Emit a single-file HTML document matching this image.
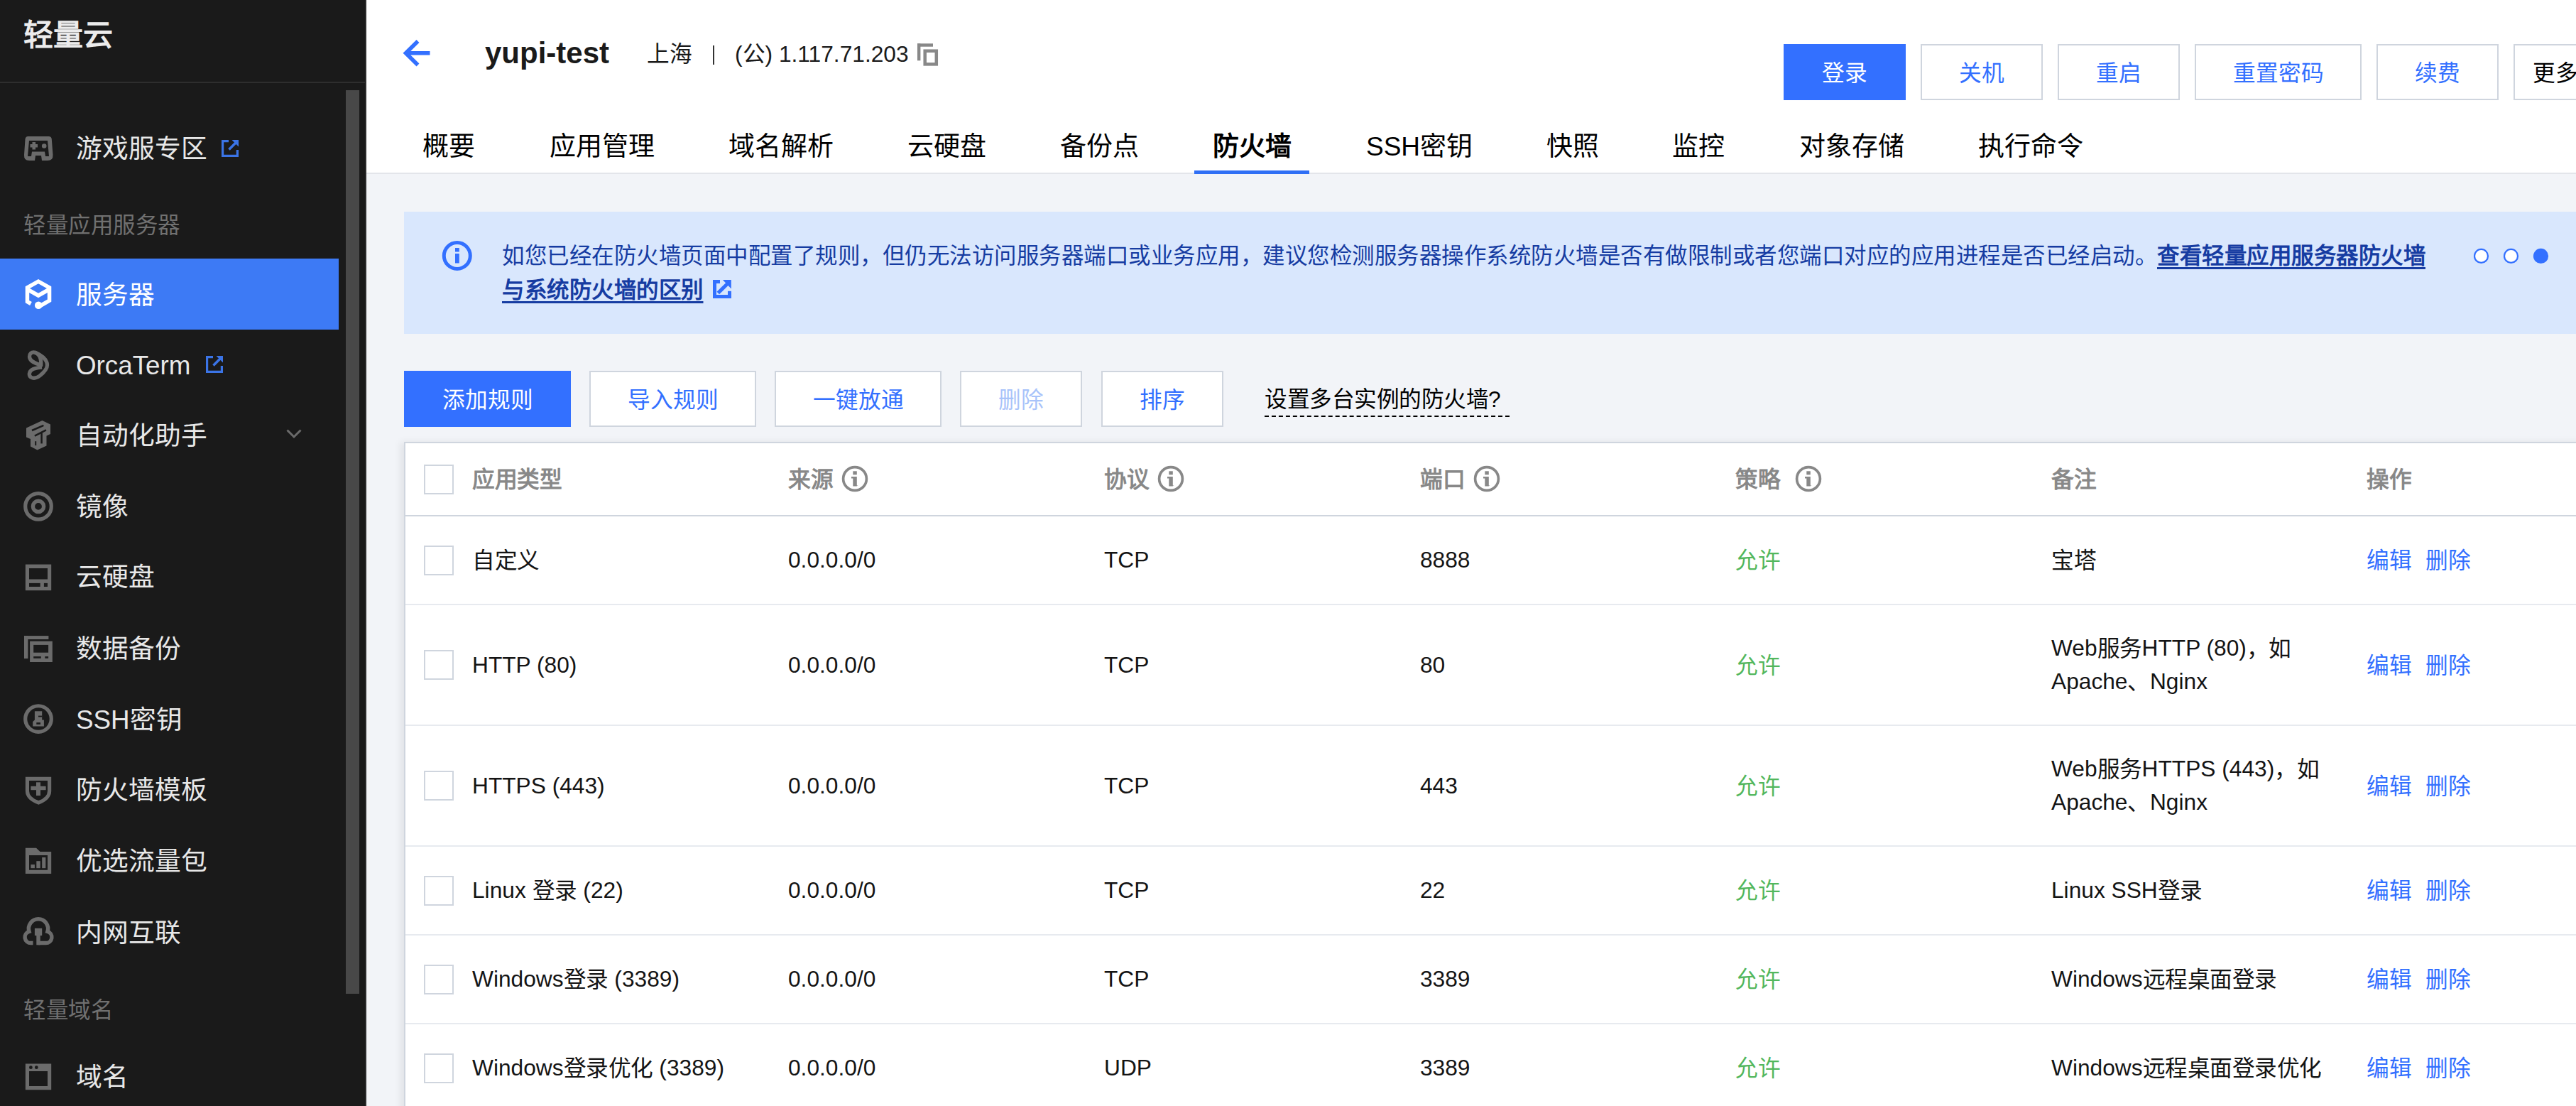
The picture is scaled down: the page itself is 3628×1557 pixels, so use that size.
<!DOCTYPE html>
<html lang="zh-CN"><head><meta charset="utf-8">
<style>
*{box-sizing:border-box;margin:0;padding:0}
html,body{width:3628px;height:1557px;overflow:hidden}
body{position:relative;background:#f2f4f8;font-family:"Liberation Sans",sans-serif;color:#000}
.a{position:absolute;white-space:nowrap}
#side{position:absolute;left:0;top:0;width:516px;height:1557px;background:#1a1a1a;border-right:2px solid #2b2b2b}
.logo{left:33px;top:19.5px;font-size:42px;font-weight:900;color:#ececec;line-height:60px}
.sep{left:0;top:115px;width:514px;height:2px;background:#2e2e2e}
.thumb{left:487px;top:127px;width:19px;height:1272px;background:#484848}
.si{left:107px;font-size:36.75px;color:#e8e8e8;line-height:50px}
.sl{left:33px;font-size:31.5px;color:#707070;line-height:44px;letter-spacing:-0.5px}
.ic{position:absolute;left:25px;width:60px;height:60px}
.act{left:0;top:364px;width:477px;height:100px;background:#3d7af5}
#main{position:absolute;left:516px;top:0;width:3112px;height:1557px}

.t-title{left:683px;top:46.5px;font-size:42px;font-weight:bold;color:#1a1a1a;line-height:56px}
.t-sub{top:53px;font-size:31.7px;color:#1a1a1a;line-height:46px}
.btn{height:79px;padding-top:1.5px;border:2.5px solid #cfd5de;background:#fff;color:#3370ff;font-size:31.7px;line-height:74px;text-align:center}
.btn.pri{background:#3370ff;border-color:#3370ff;color:#fff}
.tab{top:182px;font-size:37px;color:#000;line-height:50px}

.bn{font-size:31.5px;line-height:48px;color:#163ca2;letter-spacing:-0.5px}
.bn b{text-decoration:underline;text-decoration-thickness:3px;text-underline-offset:5px}
.tip{font-size:31.7px;line-height:46px;color:#000;border-bottom:2px dashed #000;height:48px}
#tbl{left:569px;top:622px;width:3100px;height:1000px;background:#fff;border-top:2px solid #cfd5de;border-left:2px solid #cfd5de;box-shadow:-5px 0 10px rgba(0,0,0,0.07)}
.tr{position:absolute;left:0;width:3100px;border-bottom:2px solid #e7eaef}
.th{border-bottom-color:#cfd5de}
.th .td{color:#888;font-weight:bold}
.td{position:absolute;top:0;bottom:0;display:flex;align-items:center;font-size:31.7px;line-height:47px;color:#141414;white-space:nowrap}
.cb{position:absolute;left:26px;top:50%;margin-top:-21px;width:42px;height:42px;border:2px solid #cfd5de;background:#fff}
.qi{display:inline-block;width:40px;height:40px;margin-left:11px}
.c{letter-spacing:-0.5px;position:relative;top:1px}
.tx{display:block}
.tx .qi{vertical-align:middle;position:relative;top:-2.5px}
</style></head><body>
<div id="side">
  <div class="a logo">轻量云</div>
  <div class="a sep"></div>
  <div class="a thumb"></div>
  <div class="a act"></div>

  <!-- game -->
  <svg class="ic" style="top:180px" viewBox="0 0 60 60"><path fill="#6b6b6b" fill-rule="evenodd" d="M14.5,12H43.5Q47.5,12 47.8,16L49.5,38Q50,46 42,46H34L33,39H25L24,46H16Q8.5,46 9,38L10.5,16Q11,12 14.5,12ZM16,18H42L44,40H39L38,33.5H20L19,40H14Z"/><rect fill="#6b6b6b" x="17.5" y="23" width="10.5" height="4.5"/><rect fill="#6b6b6b" x="20.5" y="20" width="4.5" height="10.5"/><circle fill="#6b6b6b" cx="37.2" cy="25.5" r="3.3"/></svg>
  <div class="a si" style="top:185px">游戏服专区</div>
  <svg class="a" style="left:300px;top:185px;width:40px;height:40px" viewBox="0 0 40 40"><path fill="none" stroke="#3b74e6" stroke-width="3.2" d="M22,13.6H13.6V34.4H34.4V26"/><path fill="#3b74e6" d="M26.5,12H36V21.5Z"/><path stroke="#3b74e6" stroke-width="3.5" d="M22.5,25.5L32,16"/></svg>

  <div class="a sl" style="top:294.5px">轻量应用服务器</div>

  <!-- server -->
  <svg class="ic" style="top:383px" viewBox="0 0 60 60"><g fill="none" stroke="#fff" stroke-width="5.5"><path d="M18.5,44.5L13.45,41.7V21.9L29,13.1L44.55,21.9V40.2L30,48.5"/><path d="M13.45,24.25L29,33L44.55,24.25"/></g><circle fill="#fff" cx="29.2" cy="46.8" r="5.3"/></svg>
  <div class="a si" style="top:391px;color:#fff">服务器</div>

  <!-- orcaterm -->
  <svg class="ic" style="top:483px" viewBox="0 0 60 60"><g fill="none" stroke="#6b6b6b" stroke-width="5.3"><path d="M31,30.5C25,28.5 16.5,25.5 16.5,19C16.5,14.5 19.5,12.8 22.5,12.8C26,12.8 30.5,16 32,22C33,26 33,29 32.5,33"/><path d="M24,13C31,16 41.5,22 41.5,31C41.5,37 36,42 31,46C27,49 22,50 18.5,48C15,45.5 16,40 20,37.5C24,35 30,34.5 34,34"/></g></svg>
  <div class="a si" style="top:490px">OrcaTerm</div>
  <svg class="a" style="left:277.6px;top:488.5px;width:40px;height:40px" viewBox="0 0 40 40"><path fill="none" stroke="#3b74e6" stroke-width="3.2" d="M22,13.6H13.6V34.4H34.4V26"/><path fill="#3b74e6" d="M26.5,12H36V21.5Z"/><path stroke="#3b74e6" stroke-width="3.5" d="M22.5,25.5L32,16"/></svg>

  <!-- automation -->
  <svg class="ic" style="top:581px" viewBox="0 0 60 60"><path fill="#6b6b6b" d="M12,21.5L34.5,11L46,16.5V30L40.5,32.5V46.5L27.5,52.5L18,47.5V37L12,34.5Z"/><g stroke="#1a1a1a" stroke-width="2.5"><path d="M20,25L36.4,17.9"/><path d="M23.9,32.6L39.9,24.4"/><path d="M33.6,28.2V43.4"/><path d="M25.2,40.2V46.1" stroke-width="2"/></g></svg>
  <div class="a si" style="top:589px">自动化助手</div>
  <svg class="a" style="left:390px;top:585px;width:50px;height:50px" viewBox="0 0 50 50"><path fill="none" stroke="#6b6b6b" stroke-width="3" d="M14.5,20.5L24,30L33.5,20.5"/></svg>

  <!-- image -->
  <svg class="ic" style="top:681px" viewBox="0 0 60 60"><g fill="none" stroke="#6b6b6b"><circle cx="29" cy="31.9" r="18.3" stroke-width="5.2"/><circle cx="29" cy="31.9" r="7.6" stroke-width="5.4"/></g></svg>
  <div class="a si" style="top:689px">镜像</div>

  <!-- disk -->
  <svg class="ic" style="top:781px" viewBox="0 0 60 60"><rect fill="#6b6b6b" x="10.85" y="13.56" width="36.35" height="36.64"/><g fill="#1a1a1a"><rect x="16" y="19" width="26" height="15.5"/><rect x="16" y="39.9" width="15.7" height="5.1"/><rect x="36.9" y="39.9" width="5.1" height="5.1"/></g></svg>
  <div class="a si" style="top:788px">云硬盘</div>

  <!-- backup -->
  <svg class="ic" style="top:881px" viewBox="0 0 60 60"><g fill="#6b6b6b"><rect x="9" y="14.1" width="34.4" height="4.9"/><rect x="9" y="14.1" width="5.4" height="32"/><rect x="17.1" y="21.7" width="31.7" height="29.3"/></g><g fill="#1a1a1a"><rect x="22.2" y="26.9" width="20.9" height="10.8"/><rect x="22.2" y="43.1" width="10.6" height="2.7"/><rect x="38.3" y="43.1" width="4.8" height="2.7"/></g></svg>
  <div class="a si" style="top:889px">数据备份</div>

  <!-- ssh -->
  <svg class="ic" style="top:981px" viewBox="0 0 60 60"><circle fill="none" stroke="#6b6b6b" stroke-width="5.2" cx="29" cy="31.05" r="18.3"/><path fill="#6b6b6b" d="M23.9,20.3H34.2V32.6H36.9V41.5H21.2V35L23.9,32.6Z"/><g fill="#1a1a1a"><rect x="29" y="26.6" width="5.2" height="1.8"/><rect x="26.3" y="36.1" width="5.7" height="2.7"/></g></svg>
  <div class="a si" style="top:989px">SSH密钥</div>

  <!-- firewall -->
  <svg class="ic" style="top:1081px" viewBox="0 0 60 60"><path fill="#6b6b6b" fill-rule="evenodd" d="M10.85,12.75H47.2V32.5Q47.2,45 29.3,51.8Q10.85,45 10.85,32.5ZM16,17.9H42V32.5Q42,41.5 29.3,46.1Q16,41.5 16,32.5Z"/><g fill="#6b6b6b"><rect x="18.4" y="25.8" width="21.2" height="5.4"/><rect x="26" y="20.3" width="6" height="18.7"/></g></svg>
  <div class="a si" style="top:1088px">防火墙模板</div>

  <!-- traffic -->
  <svg class="ic" style="top:1181px" viewBox="0 0 60 60"><path fill="#6b6b6b" fill-rule="evenodd" d="M10.85,12.75H26L31.5,17.9H47.2V49.1H10.85ZM16,23H42V43.7H16Z"/><g fill="#6b6b6b"><rect x="18.4" y="36.1" width="5.5" height="5.1"/><rect x="26.3" y="31.2" width="5.4" height="10"/><rect x="34.2" y="26" width="5.1" height="15.2"/></g></svg>
  <div class="a si" style="top:1188px">优选流量包</div>

  <!-- intranet -->
  <svg class="ic" style="top:1281px" viewBox="0 0 60 60"><path fill="none" stroke="#6b6b6b" stroke-width="5.5" d="M21.5,46.6H18.5A8.3,8.3 0 0 1 16,30.35A13.6,13.6 0 1 1 42,30.35A8.3,8.3 0 0 1 39.5,46.6H29"/><g fill="#6b6b6b"><rect x="23.9" y="25.8" width="10.3" height="10.3"/><rect x="26.3" y="36" width="5.4" height="13.3"/></g></svg>
  <div class="a si" style="top:1289px">内网互联</div>

  <div class="a sl" style="top:1399.5px">轻量域名</div>

  <!-- domain -->
  <svg class="ic" style="top:1484px" viewBox="0 0 60 60"><path fill="#6b6b6b" fill-rule="evenodd" d="M10.85,13.56H47.2V50.2H10.85ZM16,23.9H42V45H16Z"/><g fill="#1a1a1a"><circle cx="18.4" cy="18.7" r="2.4"/><circle cx="26.3" cy="18.7" r="2.4"/></g></svg>
  <div class="a si" style="top:1492px">域名</div>
</div>

<div id="main">
  <div class="a" style="left:0;top:0;width:3112px;height:243px;background:#fff"></div>
  <div class="a" style="left:0;top:243px;width:3112px;height:2px;background:#e3e5ea"></div>
</div>
<div id="hdr">
  <svg class="a" style="left:560px;top:50px;width:50px;height:50px" viewBox="560 50 50 50"><path fill="none" stroke="#3370ff" stroke-width="5.6" d="M588.5,58L571.5,74.8L588.5,91.6M572,74.8H605.5"/></svg>
  <div class="a t-title">yupi-test</div>
  <div class="a t-sub" style="left:911px">上海</div>
  <div class="a" style="left:1003.5px;top:64px;width:2.5px;height:27px;background:#333"></div>
  <div class="a t-sub" style="left:1035px">(公) 1.117.71.203</div>
  <svg class="a" style="left:1290px;top:59px;width:34px;height:36px" viewBox="1290 59 34 36"><g fill="#888"><rect x="1292" y="61.3" width="22" height="4.4"/><rect x="1292" y="61.3" width="4.4" height="24"/></g><rect x="1302.7" y="71.7" width="16.1" height="18.7" fill="none" stroke="#888" stroke-width="4.5"/></svg>

  <div class="a btn pri" style="left:2512px;top:62px;width:172px">登录</div>
  <div class="a btn" style="left:2705px;top:62px;width:172px">关机</div>
  <div class="a btn" style="left:2898px;top:62px;width:172px">重启</div>
  <div class="a btn" style="left:3091px;top:62px;width:235px">重置密码</div>
  <div class="a btn" style="left:3347px;top:62px;width:172px">续费</div>
  <div class="a btn" style="left:3540px;top:62px;width:172px;color:#000;text-align:left;padding-left:25px">更多操作</div>

  <div class="a tab" style="left:595px">概要</div>
  <div class="a tab" style="left:774px">应用管理</div>
  <div class="a tab" style="left:1026px">域名解析</div>
  <div class="a tab" style="left:1278px">云硬盘</div>
  <div class="a tab" style="left:1493px">备份点</div>
  <div class="a tab" style="left:1708px;font-weight:bold">防火墙</div>
  <div class="a tab" style="left:1924px">SSH密钥</div>
  <div class="a tab" style="left:2178px">快照</div>
  <div class="a tab" style="left:2355px">监控</div>
  <div class="a tab" style="left:2534px">对象存储</div>
  <div class="a tab" style="left:2786px">执行命令</div>
  <div class="a" style="left:1682px;top:240px;width:162px;height:5px;background:#2f6ff5"></div>
</div>

<div id="cnt">
  <div class="a" style="left:569px;top:298px;width:3059px;height:172px;background:#d9e7fd"></div>
  <svg class="a" style="left:615px;top:332px;width:58px;height:58px" viewBox="615 332 58 58"><circle cx="643.8" cy="360" r="18.5" fill="none" stroke="#3370ff" stroke-width="5"/><g fill="#3370ff"><rect x="641" y="349" width="5.8" height="5.5"/><rect x="641" y="357" width="5.8" height="13.5"/></g></svg>
  <div class="a bn" style="left:707px;top:336px">如您已经在防火墙页面中配置了规则，但仍无法访问服务器端口或业务应用，建议您检测服务器操作系统防火墙是否有做限制或者您端口对应的应用进程是否已经启动。<b>查看轻量应用服务器防火墙</b></div>
  <div class="a bn" style="left:707px;top:384px"><b>与系统防火墙的区别</b></div>
  <svg class="a" style="left:1000px;top:390px;width:34px;height:34px" viewBox="1000 390 34 34"><g fill="#3370ff"><rect x="1004" y="394" width="10" height="5"/><rect x="1004" y="394" width="5" height="26"/><rect x="1004" y="415" width="26" height="5"/><rect x="1025" y="409.8" width="5" height="10.2"/><path d="M1017.9,394H1029.8V406.6Z"/></g><path d="M1011.3,412.6L1024.5,399.4" stroke="#3370ff" stroke-width="5"/></svg>
  <svg class="a" style="left:3470px;top:330px;width:158px;height:60px" viewBox="3470 330 158 60"><circle cx="3494.5" cy="360.4" r="9.5" fill="#fff" stroke="#3370ff" stroke-width="2.2"/><circle cx="3536.5" cy="360.4" r="9.5" fill="#fff" stroke="#3370ff" stroke-width="2.2"/><circle cx="3578.5" cy="360.4" r="10.6" fill="#3370ff"/></svg>

  <div class="a btn pri" style="left:569px;top:522px;width:235px">添加规则</div>
  <div class="a btn" style="left:830px;top:522px;width:235px">导入规则</div>
  <div class="a btn" style="left:1091px;top:522px;width:235px">一键放通</div>
  <div class="a btn" style="left:1352px;top:522px;width:172px;color:#a8c3fa">删除</div>
  <div class="a btn" style="left:1551px;top:522px;width:172px">排序</div>
  <div class="a tip" style="left:1781px;top:539px;padding-right:13px;letter-spacing:-0.5px">设置多台实例的防火墙?</div>

  <div class="a" id="tbl">
    <div class="tr th" style="top:0;height:103px">
      <div class="cb"></div>
      <div class="td" style="left:94px"><div class="tx"><span class="c">应用类型</span></div></div>
      <div class="td" style="left:539px"><div class="tx"><span class="c">来源</span><svg class="qi" viewBox="0 0 40 40"><circle cx="20" cy="20" r="16.4" fill="none" stroke="#888" stroke-width="3.7"/><rect x="17.3" y="9.3" width="5.5" height="5" fill="#888"/><path fill="#888" d="M15,17H22.8V29.5L24.5,29.2L22.5,30.5H17.3V19.5H15Z"/></svg></div></div>
      <div class="td" style="left:984px"><div class="tx"><span class="c">协议</span><svg class="qi" viewBox="0 0 40 40"><circle cx="20" cy="20" r="16.4" fill="none" stroke="#888" stroke-width="3.7"/><rect x="17.3" y="9.3" width="5.5" height="5" fill="#888"/><path fill="#888" d="M15,17H22.8V29.5L24.5,29.2L22.5,30.5H17.3V19.5H15Z"/></svg></div></div>
      <div class="td" style="left:1429px"><div class="tx"><span class="c">端口</span><svg class="qi" viewBox="0 0 40 40"><circle cx="20" cy="20" r="16.4" fill="none" stroke="#888" stroke-width="3.7"/><rect x="17.3" y="9.3" width="5.5" height="5" fill="#888"/><path fill="#888" d="M15,17H22.8V29.5L24.5,29.2L22.5,30.5H17.3V19.5H15Z"/></svg></div></div>
      <div class="td" style="left:1873px"><div class="tx"><span class="c">策略</span><svg class="qi" style="margin-left:20px" viewBox="0 0 40 40"><circle cx="20" cy="20" r="16.4" fill="none" stroke="#888" stroke-width="3.7"/><rect x="17.3" y="9.3" width="5.5" height="5" fill="#888"/><path fill="#888" d="M15,17H22.8V29.5L24.5,29.2L22.5,30.5H17.3V19.5H15Z"/></svg></div></div>
      <div class="td" style="left:2318px"><div class="tx"><span class="c">备注</span></div></div>
      <div class="td" style="left:2762px"><div class="tx"><span class="c">操作</span></div></div>
    </div>
    <div class="tr" style="top:103px;height:125px">
      <div class="cb"></div>
      <div class="td" style="left:94px"><div class="tx"><span class="c">自定义</span></div></div>
      <div class="td" style="left:539px"><div class="tx">0.0.0.0/0</div></div>
      <div class="td" style="left:984px"><div class="tx">TCP</div></div>
      <div class="td" style="left:1429px"><div class="tx">8888</div></div>
      <div class="td" style="left:1873px;color:#52b75d"><div class="tx"><span class="c">允许</span></div></div>
      <div class="td" style="left:2318px"><div class="tx"><span class="c">宝塔</span></div></div>
      <div class="td" style="left:2762px;color:#3370ff"><div class="tx"><span class="c">编辑</span><span style="margin-left:20px"><span class="c">删除</span></span></div></div>
    </div>
    <div class="tr" style="top:228px;height:170px">
      <div class="cb"></div>
      <div class="td" style="left:94px"><div class="tx">HTTP (80)</div></div>
      <div class="td" style="left:539px"><div class="tx">0.0.0.0/0</div></div>
      <div class="td" style="left:984px"><div class="tx">TCP</div></div>
      <div class="td" style="left:1429px"><div class="tx">80</div></div>
      <div class="td" style="left:1873px;color:#52b75d"><div class="tx"><span class="c">允许</span></div></div>
      <div class="td" style="left:2318px"><div class="tx">Web<span class="c">服务</span>HTTP (80)<span class="c">，如</span><br>Apache<span class="c">、</span>Nginx</div></div>
      <div class="td" style="left:2762px;color:#3370ff"><div class="tx"><span class="c">编辑</span><span style="margin-left:20px"><span class="c">删除</span></span></div></div>
    </div>
    <div class="tr" style="top:398px;height:170px">
      <div class="cb"></div>
      <div class="td" style="left:94px"><div class="tx">HTTPS (443)</div></div>
      <div class="td" style="left:539px"><div class="tx">0.0.0.0/0</div></div>
      <div class="td" style="left:984px"><div class="tx">TCP</div></div>
      <div class="td" style="left:1429px"><div class="tx">443</div></div>
      <div class="td" style="left:1873px;color:#52b75d"><div class="tx"><span class="c">允许</span></div></div>
      <div class="td" style="left:2318px"><div class="tx">Web<span class="c">服务</span>HTTPS (443)<span class="c">，如</span><br>Apache<span class="c">、</span>Nginx</div></div>
      <div class="td" style="left:2762px;color:#3370ff"><div class="tx"><span class="c">编辑</span><span style="margin-left:20px"><span class="c">删除</span></span></div></div>
    </div>
    <div class="tr" style="top:568px;height:125px">
      <div class="cb"></div>
      <div class="td" style="left:94px"><div class="tx">Linux <span class="c">登录</span> (22)</div></div>
      <div class="td" style="left:539px"><div class="tx">0.0.0.0/0</div></div>
      <div class="td" style="left:984px"><div class="tx">TCP</div></div>
      <div class="td" style="left:1429px"><div class="tx">22</div></div>
      <div class="td" style="left:1873px;color:#52b75d"><div class="tx"><span class="c">允许</span></div></div>
      <div class="td" style="left:2318px"><div class="tx">Linux SSH<span class="c">登录</span></div></div>
      <div class="td" style="left:2762px;color:#3370ff"><div class="tx"><span class="c">编辑</span><span style="margin-left:20px"><span class="c">删除</span></span></div></div>
    </div>
    <div class="tr" style="top:693px;height:125px">
      <div class="cb"></div>
      <div class="td" style="left:94px"><div class="tx">Windows<span class="c">登录</span> (3389)</div></div>
      <div class="td" style="left:539px"><div class="tx">0.0.0.0/0</div></div>
      <div class="td" style="left:984px"><div class="tx">TCP</div></div>
      <div class="td" style="left:1429px"><div class="tx">3389</div></div>
      <div class="td" style="left:1873px;color:#52b75d"><div class="tx"><span class="c">允许</span></div></div>
      <div class="td" style="left:2318px"><div class="tx">Windows<span class="c">远程桌面登录</span></div></div>
      <div class="td" style="left:2762px;color:#3370ff"><div class="tx"><span class="c">编辑</span><span style="margin-left:20px"><span class="c">删除</span></span></div></div>
    </div>
    <div class="tr" style="top:818px;height:125px">
      <div class="cb"></div>
      <div class="td" style="left:94px"><div class="tx">Windows<span class="c">登录优化</span> (3389)</div></div>
      <div class="td" style="left:539px"><div class="tx">0.0.0.0/0</div></div>
      <div class="td" style="left:984px"><div class="tx">UDP</div></div>
      <div class="td" style="left:1429px"><div class="tx">3389</div></div>
      <div class="td" style="left:1873px;color:#52b75d"><div class="tx"><span class="c">允许</span></div></div>
      <div class="td" style="left:2318px"><div class="tx">Windows<span class="c">远程桌面登录优化</span></div></div>
      <div class="td" style="left:2762px;color:#3370ff"><div class="tx"><span class="c">编辑</span><span style="margin-left:20px"><span class="c">删除</span></span></div></div>
    </div>
  </div>
</div>
</body></html>
